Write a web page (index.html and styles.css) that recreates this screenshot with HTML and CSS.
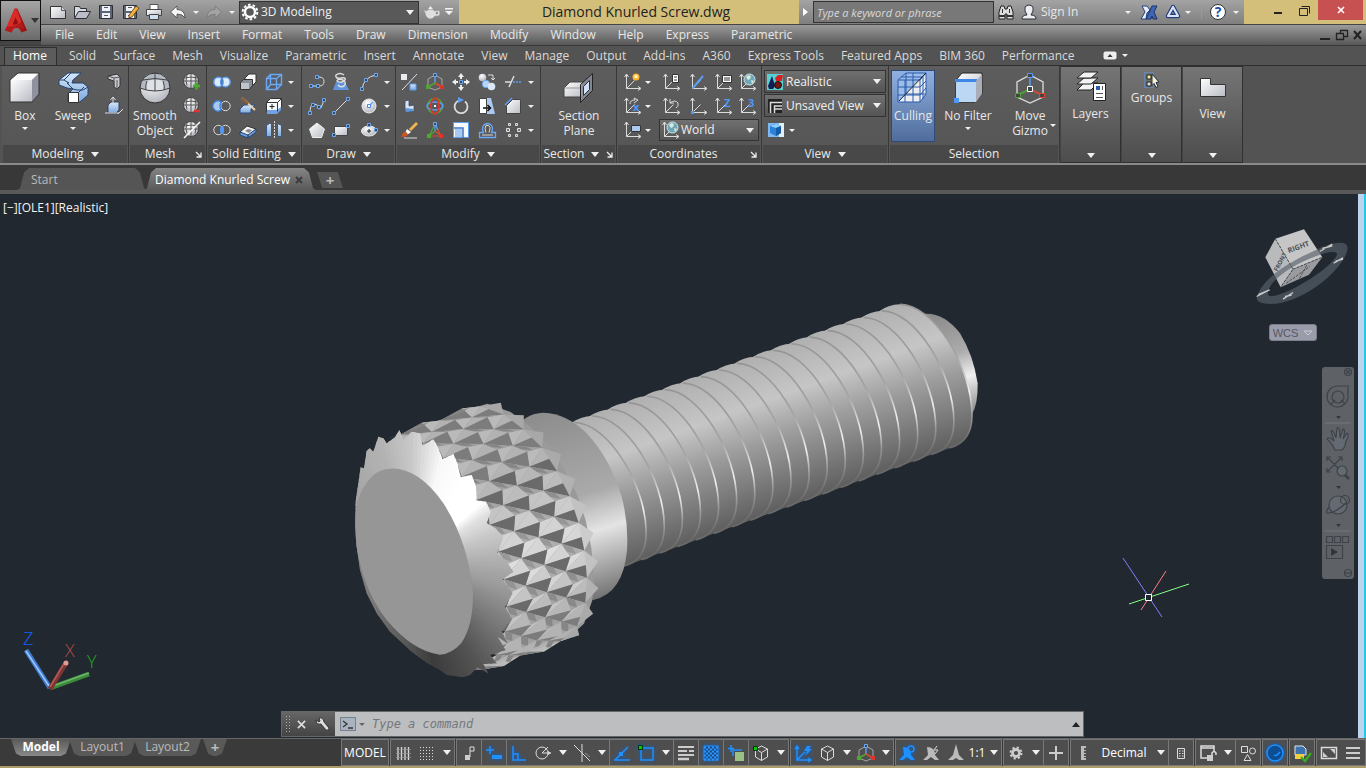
FILE: index.html
```html
<!DOCTYPE html>
<html lang="en">
<head>
<meta charset="UTF-8">
<meta name="viewport" content="width=device-width, initial-scale=1">
<title>Diamond Knurled Screw.dwg</title>
<link rel="stylesheet" href="styles.css">
</head>
<body>

<svg class="sprite" aria-hidden="true">
<defs>
<linearGradient id="gw" x1="0" y1="0" x2="1" y2="1"><stop offset="0" stop-color="#fff"/><stop offset="1" stop-color="#b9bcc4"/></linearGradient>
<linearGradient id="gb" x1="0" y1="0" x2="0" y2="1"><stop offset="0" stop-color="#d6e8fb"/><stop offset="1" stop-color="#7fa9dd"/></linearGradient>
<radialGradient id="gs" cx=".4" cy=".3" r=".8"><stop offset="0" stop-color="#fff"/><stop offset="1" stop-color="#a9adb5"/></radialGradient>
<linearGradient id="gr" x1="0" y1="0" x2="1" y2="0"><stop offset="0" stop-color="#e3342f"/><stop offset="1" stop-color="#8e0f12"/></linearGradient>
</defs>
<!-- quick access -->
<symbol id="logo" viewBox="0 0 26 28"><path d="M12 1h3l10 23-6 2-2-4q-4-2-7 1l-1 3-7-2z" fill="url(#gr)"/><path d="M12 2L4 20q9 0 15-5l-5-13z" fill="#d92b28"/><path d="M13 10l3 6q-3 2-6 2z" fill="#8f1114"/><path d="M2 24l7 2 2-5q6-2 11 1l-3-6q-7 4-15 4z" fill="#b51b1c"/></symbol>
<symbol id="new" viewBox="0 0 20 20"><path d="M2.500 4.500h11l4 4v8h-15z" fill="url(#gw)" stroke="#333"/><path d="M13.500 4.500v4h4" fill="#ddd" stroke="#555"/></symbol>
<symbol id="open" viewBox="0 0 20 20"><path d="M2.500 15.500v-11h5l1 2h6v3" fill="#d8dbe0" stroke="#2c2f36"/><path d="M2.500 16.500l4-7h12l-4 7z" fill="#b9bec8" stroke="#2c2f36"/></symbol>
<symbol id="save" viewBox="0 0 20 20"><path d="M3.500 3.500h13v13h-13z" fill="#5d6675" stroke="#2c2f36"/><path d="M6 4h8v5H6zM6 11h8v5H6z" fill="#eef1f5"/><path d="M8 5h4v1H8zM8 13h4v1H8z" fill="#556"/></symbol>
<symbol id="saveas" viewBox="0 0 20 20"><use href="#save"/><path d="M9 13l7-9 3 2-7 9-3 1z" fill="#f3b13c" stroke="#5a3a10" stroke-width=".8"/></symbol>
<symbol id="print" viewBox="0 0 20 20"><path d="M6 2.500h8v5H6z" fill="#fff" stroke="#555"/><path d="M2.500 7.500h15v6h-15z" fill="url(#gw)" stroke="#444"/><path d="M5.500 12.500h9v5h-9z" fill="#cfe0f4" stroke="#444"/></symbol>
<symbol id="undo" viewBox="0 0 20 20"><path d="M9 4v3.500q8 0 8 8.500-2-4-8-4v4L2.500 10z" fill="#f4f5f7" stroke="#444" stroke-width=".8"/></symbol>
<symbol id="redo" viewBox="0 0 20 20"><path d="M11 4v3.500q-8 0-8 8.500 2-4 8-4v4l6.500-6z" fill="#a4a4a4" stroke="#777" stroke-width=".8"/></symbol>
<symbol id="gear" viewBox="0 0 20 20"><circle cx="10" cy="10" r="5" fill="none" stroke="#fff" stroke-width="2.400"/><circle cx="10" cy="10" r="7.300" fill="none" stroke="#fff" stroke-width="2" stroke-dasharray="2.600 2"/></symbol>
<symbol id="teapot" viewBox="0 0 20 20"><path d="M2 7l3 2q5-4 9 0 5-2 5 2t-5 3q-2 3-4 3-5 0-6-6z" fill="#dedede" stroke="#888" stroke-width=".6"/><path d="M7 7l2.500-3L12 7z" fill="#eee"/><path d="M15 10q2-1 2 1t-2 1z" fill="#888"/></symbol>
<symbol id="menu-down" viewBox="0 0 20 20"><path d="M6 6h8v1.500H6zM6 9h8l-4 4z" fill="#f2f2f2"/></symbol>
<symbol id="binoc" viewBox="0 0 20 20"><path d="M3 17v-7l2-6h3l1 3h2l1-3h3l2 6v7h-6v-5H9v5z" fill="#ddd" stroke="#222"/><path d="M3 13h6v2H3zM11 13h6v2h-6zM6 7h1v4H6zM13 7h1v4h-1z" fill="#333"/></symbol>
<symbol id="user" viewBox="0 0 20 20"><path d="M3 17q0-4 5-4-3-4-2-8 4-4 8 0 1 4-2 8 5 0 5 4z" fill="#eceef2" stroke="#2b2f3a"/></symbol>
<symbol id="exch" viewBox="0 0 20 20"><path d="M3 4h5l3 4-3 3-1 6H2l4-7z" fill="#e8eefa" stroke="#23407c"/><path d="M18 4h-5l-6 13h5l1-3 1 3h4l-3-7z" fill="#3f66b4" stroke="#1c3468"/></symbol>
<symbol id="a360" viewBox="0 0 20 20"><path d="M10 5l5 9H5z" fill="none" stroke="#243c78" stroke-width="4.500" stroke-linejoin="round"/><path d="M10 5l5 9H5z" fill="none" stroke="#d7e2f6" stroke-width="2.200" stroke-linejoin="round"/></symbol>
<!-- large ribbon images -->
<symbol id="box" viewBox="0 0 34 34"><path d="M2 9L10 2h21v21l-7 8H2z" fill="#b5b9c1"/><path d="M2 9h22v22H2z" fill="url(#gw)"/><path d="M2 9l8-7h21l-7 7z" fill="#fdfdfe"/><path d="M24 9l7-7v21l-7 8z" fill="#8d929c"/><path d="M2 9l8-7h21v21l-7 8H2z" fill="none" stroke="#333"/></symbol>
<symbol id="sweep" viewBox="0 0 34 34"><path d="M3 9l9-7h13l-8 7-1 3h11l5 4v8l-8 7H12v-8l5-5-6-1-8-3z" fill="url(#gb)" stroke="#27436f"/><path d="M3 9h5l5 3h-2l6 6 4 1h6l5-3M8 9l7-7M22 22l6-6" fill="none" stroke="#27436f"/><path d="M12.500 21.500h10v10h-10z" fill="#fff" stroke="#333"/></symbol>
<symbol id="sphere" viewBox="0 0 34 34"><circle cx="17" cy="17" r="15" fill="url(#gs)"/><path d="M2 17Q4 2 17 2t15 15q-15 5-30 0z" fill="#b4bac3"/><path d="M9 10q8-3 16 0l1 9q-9 2-18 0z" fill="#dfe3e8"/><path d="M2 17q15 6 30 0M9 10q-2 5-1 9M25 10q2 5 1 9M17 2v18M5 9q12-3 24 0" fill="none" stroke="#444"/><circle cx="17" cy="17" r="15" fill="none" stroke="#333"/></symbol>
<symbol id="section" viewBox="0 0 34 34"><path d="M2 17l6-6h13v15H2z" fill="url(#gw)" stroke="#444"/><path d="M2 17h16l5-6" fill="none" stroke="#999"/><path d="M18.500 13.500l12-11v17l-12 12z" fill="#8b919c" fill-opacity=".8" stroke="#222"/><path d="M21.500 15.500l6-6v9l-6 6z" fill="#cfe2f8" stroke="#333"/></symbol>
<symbol id="culling" viewBox="0 0 34 34"><path d="M2 9l8-7h20l-6 7v22H2z" fill="#9dbce8"/><path d="M2 31L30 2v21l-6 8z" fill="#eceef1"/><g fill="none" stroke="#2b5cae"><path d="M2 9h22v22H2zM2 9l8-7h20v21l-6 8M24 9l6-7M9 9v22M17 9v22M2 16h22l6-6M2 24h22l6-7M5 6h22v22M10 2v21h20M17 2v8"/></g><path d="M3 30L30 2" stroke="#222"/></symbol>
<symbol id="filter" viewBox="0 0 34 34"><path d="M5 9l6-7h20v21l-7 8H5z" fill="url(#gw)" stroke="#222"/><path d="M5 10h20v21H5z" fill="#bcd7f3"/><path d="M4 8h22v3H4z" fill="#3e86e8"/><path d="M25 10l6-7v20l-6 8z" fill="#a9adb5"/><path d="M3 27h5v5H3z" fill="#4d98fa"/></symbol>
<symbol id="gizmo" viewBox="0 0 34 34"><path d="M17 4l13 7v15l-13 6-13-6V11z" fill="none" stroke="#ddd" stroke-width="1.300"/><path d="M17 4v14" stroke="#5c9df0" stroke-width="1.500"/><path d="M17 18L5 24" stroke="#4ea72e" stroke-width="1.800"/><path d="M17 18l12 6" stroke="#e0492c" stroke-width="1.800"/><path d="M14.500 2.500h5v4h-5z" fill="#444" stroke="#5c9df0"/><path d="M14.500 15.500h5v5h-5z" fill="#444" stroke="#fff"/><path d="M2.500 22.500h5v4h-5z" fill="#444" stroke="#4ea72e"/><path d="M26.500 22.500h5v4h-5z" fill="#444" stroke="#e0492c"/></symbol>
<symbol id="layers" viewBox="0 0 34 34"><g fill="#f2f3f5" stroke="#222"><path d="M3 20l7-7h14l-7 7z"/><path d="M3 14l7-6h14l-7 6z"/><path d="M3 8l7-6h14l-7 6z"/></g><path d="M19.500 13.500h12v17h-12z" fill="#fff" stroke="#222"/><path d="M22 16h4v4h-4z" fill="#2b5cae"/><path d="M28 16h1v4h-1zM22 23h7v1h-7zM22 27h7v1h-7z" fill="#555"/></symbol>
<symbol id="groups" viewBox="0 0 20 20"><path d="M2.500 2.500h9v15h-9z" fill="none" stroke="#5c9df0" stroke-dasharray="1 1"/><path d="M5 5h4v4H5z" fill="#f1e7a0" stroke="#222"/><path d="M5 12h4v4H5z" fill="#ddd" stroke="#222"/><path d="M10 4l7 8-3 .500 2 4-2 1-2-4-2 2z" fill="#f7f2c5" stroke="#1c2b52"/></symbol>
<symbol id="viewp" viewBox="0 0 34 34"><path d="M4.500 8.500h10v6h15v12h-25z" fill="url(#gw)" stroke="#333"/></symbol>
<!-- small ribbon images -->
<symbol id="extr" viewBox="0 0 20 20"><path d="M4 4l9-2 3 3v9l-3 3-3-2V9L4 7z" fill="#c7cad1" stroke="#333"/><path d="M4 4l6 2v9M10 6l6-1M13 8v9" fill="none" stroke="#555"/></symbol>
<symbol id="press" viewBox="0 0 20 20"><path d="M4 9l3-3h8v8l-3 3H4z" fill="url(#gb)" stroke="#345"/><path d="M9 9V1M6.500 4L9 1l2.500 3M1 17h14M14 18l5-5" class="w"/></symbol>
<symbol id="ball" viewBox="0 0 20 20"><circle cx="9" cy="9" r="7.500" fill="url(#gs)" stroke="#444"/><path d="M2 9h14M9 2v14M3 6q6-2 12 0M5 3.500q-2 5 0 10M13 3.500q2 5 0 10" fill="none" stroke="#555"/></symbol>
<symbol id="more" viewBox="0 0 20 20"><use href="#ball"/><path d="M11 14h7M14.500 10.500v7" stroke="#46b02a" stroke-width="2.400"/></symbol>
<symbol id="less" viewBox="0 0 20 20"><use href="#ball"/><path d="M12 15h6" stroke="#e0332c" stroke-width="2.400"/></symbol>
<symbol id="crease" viewBox="0 0 20 20"><use href="#ball"/><path d="M2 18L18 2" stroke="#fff" stroke-width="1.400"/></symbol>
<symbol id="union" viewBox="0 0 20 20"><g fill="#dcebfb" stroke="#5c9df0" stroke-width="1.500"><circle cx="6.500" cy="10" r="4.700"/><circle cx="13.500" cy="10" r="4.700"/></g><ellipse cx="10" cy="10" rx="1.700" ry="3.500" fill="#4d83cc"/></symbol>
<symbol id="subtract" viewBox="0 0 20 20"><circle cx="13.500" cy="10" r="4.700" class="w"/><path d="M9 6a5 5 0 1 0 0 8q-2-4 0-8z" fill="#a9c9ee" stroke="#3e86e8" stroke-width="1.400"/></symbol>
<symbol id="intersect" viewBox="0 0 20 20"><circle cx="6.500" cy="10" r="4.700" class="w"/><circle cx="13.500" cy="10" r="4.700" class="w"/><ellipse cx="10" cy="10" rx="2" ry="3.800" fill="#4d98fa"/></symbol>
<symbol id="thick" viewBox="0 0 20 20"><path d="M7 6l4-4h7v8l-4 4H7z" fill="#f7f8fa" stroke="#333"/><path d="M2.500 10.500l3-3h9v6l-3 4h-9z" fill="#8a8e97" stroke="#333"/><path d="M3 11h8v6H3z" fill="#c0c3ca"/></symbol>
<symbol id="slice" viewBox="0 0 20 20"><path d="M2 13l4-4h11l-4 4v4H2z" fill="url(#gb)" stroke="#2c4f86"/><path d="M4 2l13 12" stroke="#e9d3b4" stroke-width="2"/><path d="M4 2l6 6" stroke="#8c5626" stroke-width="2"/></symbol>
<symbol id="shell" viewBox="0 0 20 20"><path d="M2 12l7-6 9 3-8 7z" fill="#f1f2f4" stroke="#333"/><path d="M2 12v3l8 3v-3zM10 15v3l8-6V9z" fill="#6fa3e3" stroke="#27436f"/><path d="M7 11l3-2 4 1-3 3z" fill="#888"/></symbol>
<symbol id="edges" viewBox="0 0 20 20"><path d="M2.500 6.500h10v11h-10zM6.500 2.500h11v10h-11zM2.500 6.500l4-4M12.500 6.500l5-4M12.500 17.500l5-5M2.500 17.500l4-5" class="b"/></symbol>
<symbol id="facex" viewBox="0 0 20 20"><path d="M2.500 6.500l4-4h11v9l-4 4h-11z" fill="#f7f8fa" stroke="#333"/><path d="M3 14h10l4-3v3l-4 4H3z" fill="#6fa3e3"/><path d="M2.500 6.500h11v9M13.500 6.500l4-4" fill="none" stroke="#333"/><path d="M8 8v5M5.500 10.500h5" stroke="#222"/></symbol>
<symbol id="sep" viewBox="0 0 20 20"><path d="M2.500 5.500l3-2h2v13h-5zM13.500 3.500l4 2v11h-4z" fill="url(#gb)" stroke="#39588c"/><path d="M10.500 1v18" stroke="#ddd" stroke-dasharray="2 1"/></symbol>
<symbol id="pline" viewBox="0 0 20 20"><path d="M4 14h8q5 0 5-4.500T12 5h-2" class="w"/><path d="M2.500 12.500h3v3h-3zM9.500 12.500h3v3h-3zM8.500 3.500h3v3h-3z" class="n"/></symbol>
<symbol id="helix" viewBox="0 0 20 20"><path d="M5 10h9l4 8H2z" fill="#5f95dc"/><path d="M13 3q-4-3-8 0-1 4 5 3 5-1 4 2-4 4-8 1 1-3 6-1 4 3 1 6-4 2-6-1" class="w" stroke-width="1.500"/></symbol>
<symbol id="arc" viewBox="0 0 20 20"><path d="M3 17Q5 5 17 3" class="w"/><path d="M1.500 15.500h3v3h-3zM5.500 6.500h3v3h-3zM15.500 1.500h3v3h-3z" class="n"/></symbol>
<symbol id="spline" viewBox="0 0 20 20"><path d="M3 17q0-9 4-9t5 4 5-8" class="w"/><path d="M1.500 15.500h3v3h-3zM4.500 7.500h3v3h-3zM10.500 9.500h3v3h-3zM15.500 2.500h3v3h-3z" class="n"/></symbol>
<symbol id="line" viewBox="0 0 20 20"><path d="M3 17L17 3" class="w"/><path d="M1.500 15.500h3v3h-3zM15.500 1.500h3v3h-3z" class="n"/></symbol>
<symbol id="circle" viewBox="0 0 20 20"><circle cx="10" cy="10" r="7" fill="url(#gs)" stroke="#eee"/><path d="M10 10l4-4" class="b"/><path d="M8.500 8.500h3v3h-3z" fill="#fff" stroke="#3e86e8"/></symbol>
<symbol id="polygon" viewBox="0 0 20 20"><path d="M10 3l7.500 6-3 8.500h-9L2.500 9z" fill="url(#gw)" stroke="#eee"/></symbol>
<symbol id="rect" viewBox="0 0 20 20"><path d="M3.500 6.500h13v9h-13z" fill="url(#gw)" stroke="#444"/><path d="M1.500 13.500h3v3h-3zM15.500 4.500h3v3h-3z" class="n"/></symbol>
<symbol id="ellipse" viewBox="0 0 20 20"><ellipse cx="10" cy="11" rx="7.500" ry="5" fill="url(#gs)" stroke="#eee"/><path d="M10 9v4M8 11h4" stroke="#222"/><path d="M8.500 3.500h3v3h-3zM15.500 8.500h3v3h-3z" class="n"/></symbol>
<symbol id="conv" viewBox="0 0 20 20"><path d="M2 2h6v6H2z" fill="#e8eaee"/><path d="M11 12h6v6h-6z" fill="url(#gb)" stroke="#5c9df0"/><path d="M3 18L18 2" class="w"/></symbol>
<symbol id="shape" viewBox="0 0 20 20"><path d="M6 5l4-1v6l5-1v5l-8 2-1-4z" fill="#d9e3f2" stroke="#3b4c6b" stroke-width=".8"/><path d="M6 12l9 1v2l-8 1z" fill="#5f95dc"/></symbol>
<symbol id="brush" viewBox="0 0 20 20"><path d="M10 9l7-7 2 2-7 7z" fill="#f0b64d"/><path d="M8 9l4 3-4 3-2-2z" fill="#fff"/><path d="M2 17q2-6 5-5l2 2q-1 3-5 3z" fill="#c8561f"/><path d="M5 18h13" class="w"/></symbol>
<symbol id="g3move" viewBox="0 0 20 20"><path d="M10 3l7 4v8l-7 3-7-3V7z" class="w" opacity=".6"/><path d="M10 3v8" stroke="#5c9df0" stroke-width="1.500"/><path d="M10 11l-7 4" stroke="#4ea72e" stroke-width="1.500"/><path d="M10 11l7 4" stroke="#e0492c" stroke-width="1.500"/><path d="M8.500 1.500h3v3h-3z" class="n"/><path d="M1 13h4v4H1z" fill="#4ea72e"/><path d="M15 13h4v4h-4z" fill="#e0332c"/></symbol>
<symbol id="g3rot" viewBox="0 0 20 20"><circle cx="10" cy="10" r="7.500" fill="none" stroke="#4ea72e" stroke-width="1.500"/><ellipse cx="10" cy="10" rx="8" ry="4" fill="none" stroke="#5c9df0" stroke-width="1.500"/><ellipse cx="10" cy="10" rx="4" ry="8" fill="none" stroke="#e0332c" stroke-width="1.700"/><path d="M9 9h2v2H9z" fill="#fff"/></symbol>
<symbol id="g3sca" viewBox="0 0 20 20"><path d="M10 4L4 16M10 11l-6 5" stroke="#4ea72e" stroke-width="1.200"/><path d="M10 3v8M10 4l3 6" stroke="#5c9df0" stroke-width="1.200"/><path d="M4 16h12l-6-5M13 10l3 6" fill="none" stroke="#e0492c" stroke-width="1.200"/><path d="M8.500 2.500h3v3h-3z" class="n"/><path d="M2 14h4v4H2z" fill="#4ea72e"/><path d="M14 14h4v4h-4z" fill="#e0332c"/></symbol>
<symbol id="move" viewBox="0 0 20 20"><path d="M10 1l3 4h-2v2H9V5H7zM10 19l3-4h-2v-2H9v2H7zM1 10l4-3v2h2v2H5v2zM19 10l-4-3v2h-2v2h2v2z" fill="#eceef1"/><path d="M8.500 8.500h3v3h-3z" class="n"/></symbol>
<symbol id="rotate" viewBox="0 0 20 20"><path d="M8 4.500a6.500 6.500 0 1 0 6 1" class="w" stroke-width="1.800"/><path d="M7 1l6 3-6 3z" fill="#5c9df0"/></symbol>
<symbol id="scale" viewBox="0 0 20 20"><path d="M2.500 2.500h15v15h-15z" fill="#f7f8fa" stroke="#5c9df0"/><path d="M3 8h9v10" fill="none" stroke="#3e76c8" stroke-width="1.500"/><path d="M4 9h7v8H4z" fill="#a9c9ee"/></symbol>
<symbol id="copy" viewBox="0 0 20 20"><circle cx="5.500" cy="5.500" r="3.800" fill="url(#gs)"/><circle cx="9" cy="12" r="3.800" fill="#b9d3f2" stroke="#5c9df0" stroke-width=".8"/><circle cx="14.500" cy="14.500" r="3.800" fill="#d9e7f8"/><path d="M11 3h5v4M14 6l2 2 2-2" class="w"/></symbol>
<symbol id="stretch" viewBox="0 0 20 20"><path d="M2.500 2.500h7v15h-7z" fill="#fff" stroke="#444"/><path d="M10 2h4l4 16h-8z" fill="#a9c9ee"/><path d="M6 12h7M10.500 9l3 3-3 3" fill="none" stroke="#111" stroke-width="1.500"/></symbol>
<symbol id="offset" viewBox="0 0 20 20"><path d="M2.500 17.500v-5h4q-2-4 0-7 4-4 8 0 2 3 0 7h4v5z" fill="none" stroke="#6aa9f7" stroke-width="1.300"/><path d="M5 15h11M9 12.500q-2-5 0-7 3-1 4 2 0 2-1 5" class="w"/></symbol>
<symbol id="trim" viewBox="0 0 20 20"><path d="M2 10h6M6 15l5-11" class="w" stroke-width="1.500"/><path d="M10 10h9" stroke="#5c9df0" stroke-width="1.500" stroke-dasharray="2 1"/></symbol>
<symbol id="chamfer" viewBox="0 0 20 20"><path d="M3.500 17.500v-8l6-6h8v14z" fill="url(#gw)" stroke="#444"/><path d="M2 9l7-7" stroke="#5c9df0" stroke-width="1.500"/></symbol>
<symbol id="array" viewBox="0 0 20 20"><g fill="#777" stroke="#ddd"><path d="M3.500 8.500h3v3h-3zM14.500 8.500h3v3h-3z"/><path d="M5.500 3.500h2v2h-2zM12.500 3.500h2v2h-2zM5.500 14.500h2v2h-2zM12.500 14.500h2v2h-2z"/></g></symbol>
<symbol id="ax" viewBox="0 0 20 20"><path d="M4.500 3v13.500H18M2.500 5l2-3 2 3M16 14.500l3 2-3 2M4.500 16.500l8-8" class="w"/></symbol>
<symbol id="ucsnew" viewBox="0 0 20 20"><use href="#ax"/><circle cx="14" cy="5" r="3.500" fill="#ffb52e"/><circle cx="14" cy="4.500" r="1.700" fill="#fff6c8"/></symbol>
<symbol id="ucsview" viewBox="0 0 20 20"><use href="#ax"/><path d="M9.500 5.500h9v6h-9z" fill="#a9c9ee" stroke="#333"/></symbol>
<symbol id="ucsface" viewBox="0 0 20 20"><use href="#ax"/><path d="M11.500 2.500h6v8h-6z" fill="#fff" stroke="#333"/><path d="M13 5h3M13 8h3" stroke="#333"/></symbol>
<symbol id="ucsobj" viewBox="0 0 20 20"><use href="#ax"/><path d="M4.500 16.500L15 4" stroke="#5c9df0" stroke-width="2"/></symbol>
<symbol id="ucsnamed" viewBox="0 0 20 20"><use href="#ax"/><path d="M9.500 3.500h9v7h-9z" fill="#fff" stroke="#333"/><path d="M11 6h6M11 8h6" stroke="#333"/></symbol>
<symbol id="ucsworld" viewBox="0 0 20 20"><use href="#ax"/><circle cx="12.500" cy="7.500" r="5.500" fill="#6ea8b8" stroke="#cfe6ee"/><path d="M9 5q2-3 5-1l-1 3-2 1zM14 8l3 1-2 3z" fill="#dcebd8"/></symbol>
<symbol id="ucsprev" viewBox="0 0 20 20"><use href="#ax"/><path d="M9 7q5-4 8 0 1 3-2 5M9 3v4h4" class="w"/></symbol>
<symbol id="ucsorg" viewBox="0 0 20 20"><use href="#ax"/><path d="M3 15h3v3H3z" fill="#4d98fa"/></symbol>
<symbol id="real" viewBox="0 0 20 20"><path d="M2 2h16v16H2z" fill="#58cfd0"/><path d="M3 14l4-10 3 10-2 3H4z" fill="#121b55"/><path d="M10 6l3-3h5l-1 6h-6z" fill="#d9201f"/><circle cx="13" cy="13" r="3.500" fill="#7a1414" stroke="#111"/></symbol>
<symbol id="unsaved" viewBox="0 0 20 20"><path d="M3 3h14v14H3z" fill="#222"/><path d="M5.500 17V6.500H17M9.500 17v-7H17M10 13h7" class="w" stroke-width="1.500"/></symbol>
<symbol id="vcube" viewBox="0 0 20 20"><path d="M2 3h16v14H2z" fill="#7db8ee"/><path d="M13 3h5v14h-5z" fill="#e6eef6"/><path d="M4 6l5-2 6 2v7l-5 3-6-3z" fill="#2b80d8"/><path d="M4 6l6 2 5-2-5-2z" fill="#8fd0ff"/><path d="M10 8v8l5-3V6z" fill="#155ba6"/></symbol>
<!-- status bar -->
<symbol id="s-grid" viewBox="0 0 20 20"><path d="M5 4v13M8.500 4v13M12 4v13M15.500 4v13" stroke="#ddd" stroke-width="1.300"/><path d="M3 6.500h15M3 10.500h15M3 14.500h15" stroke="#999" stroke-width=".7"/></symbol>
<symbol id="s-dots" viewBox="0 0 20 20"><path d="M3 4.500h14M3 7.500h14M3 10.500h14M3 13.500h14M3 16.500h14" stroke="#ddd" stroke-dasharray="1 2"/></symbol>
<symbol id="s-snap" viewBox="0 0 20 20"><path d="M11 14V4h4v4h-4" class="w"/><path d="M6 12h5v5H6z" fill="#ccc"/></symbol>
<symbol id="s-dyn" viewBox="0 0 20 20"><path d="M6 3v8M2 7h8" class="s"/><path d="M8 12h10v4H8z" fill="#1e90ff"/></symbol>
<symbol id="s-ortho" viewBox="0 0 20 20"><path d="M4 3v14h13M4 11h5v6" class="s"/></symbol>
<symbol id="s-polar" viewBox="0 0 20 20"><circle cx="9" cy="10" r="6" class="w"/><path d="M9 10h9M9 10l6-6" class="w"/><path d="M15 8l3 2-3 2z" fill="#dcdcdc"/></symbol>
<symbol id="s-iso" viewBox="0 0 20 20"><path d="M2 2l16 16M10 1v18" class="w"/><path d="M18 14l-5-4" class="w" opacity=".5"/></symbol>
<symbol id="s-track" viewBox="0 0 20 20"><path d="M2 17h16M3 17L16 4" class="s"/><path d="M7 9h4v4H7z" fill="#1e90ff"/></symbol>
<symbol id="s-osnap" viewBox="0 0 20 20"><path d="M5 5h12v12H5z" class="s"/><path d="M2.500 2.500h4v4h-4z" fill="#0c0" stroke="#031"/></symbol>
<symbol id="s-lwt" viewBox="0 0 20 20"><path d="M2 4h16" stroke="#ccc" stroke-width="2"/><path d="M2 8h9M13 8h5M2 12h16" stroke="#ccc" stroke-width="2"/><path d="M2 16h11" stroke="#ccc" stroke-width="2.500"/></symbol>
<symbol id="s-trans" viewBox="0 0 20 20"><path d="M3 3h14v14H3z" fill="#174b87" stroke="#1e90ff"/><path d="M3 4.500h14M3 8.500h14M3 12.500h14M3 16.500h14" stroke="#2f93fa" stroke-width="2" stroke-dasharray="2 2"/><path d="M5 6.500h12M5 10.500h12M5 14.500h12" stroke="#2f93fa" stroke-width="2" stroke-dasharray="2 2"/></symbol>
<symbol id="s-cycle" viewBox="0 0 20 20"><path d="M5 2v7M2 5.500h6M7 13V7h9" class="s"/><path d="M9 9h9v9H9z" fill="#9cc083"/></symbol>
<symbol id="s-cube" viewBox="0 0 20 20"><path d="M10.500 3l6 3v8l-6 3.500-6-3.500V6zM4.500 6l6 3.500 6-3.500M10.500 9.500v8" class="w"/></symbol>
<symbol id="s-3dos" viewBox="0 0 20 20"><use href="#s-cube"/><path d="M2.500 3.500h4v4h-4z" fill="#0c0" stroke="#031"/></symbol>
<symbol id="s-ducs" viewBox="0 0 20 20"><path d="M4 4v13h14M4 17l8-8M2 6l2-3 2 3M15 15l3 2-3 2" class="s"/><path d="M14 3l-3 5h3l-2 5 7-7h-3l2-3z" fill="#1e90ff"/></symbol>
<symbol id="s-ann" viewBox="0 0 20 20"><path d="M10 1l3 11 5 5h-5l-3-2-3 2H2l5-5z" fill="#bbb"/></symbol>
<symbol id="s-ann1" viewBox="0 0 20 20"><path d="M5 4q8 0 8 8l4 5h-4l-4-3-4 3H1l5-5z" fill="#1e90ff"/><circle cx="13" cy="6" r="3" class="s"/></symbol>
<symbol id="s-ann2" viewBox="0 0 20 20"><path d="M5 4q8 0 8 8l4 5h-4l-4-3-4 3H1l5-5z" fill="#bbb"/><path d="M15 3l-3 4h4l-3 4" class="w"/></symbol>
<symbol id="s-gear" viewBox="0 0 20 20"><circle cx="10" cy="10" r="3.500" fill="none" stroke="#ccc" stroke-width="2.800"/><circle cx="10" cy="10" r="5.500" fill="none" stroke="#ccc" stroke-width="2" stroke-dasharray="2.200 2.120"/></symbol>
<symbol id="s-plus" viewBox="0 0 20 20"><path d="M3 10h14M10 3v14" stroke="#ccc" stroke-width="2"/></symbol>
<symbol id="s-ruler" viewBox="0 0 20 20"><path d="M8 3h5v2h-2v2h2v1h-2v2h2v1h-2v2h2v1h-2v1h2v2H8z" fill="#bbb"/></symbol>
<symbol id="s-list" viewBox="0 0 20 20"><path d="M6.500 5.500h7v10h-7z" class="w"/><path d="M8 8h1.500M11 8h1.500M8 10.500h1.500M11 10.500h1.500M8 13h1.500M11 13h1.500" stroke="#ddd"/></symbol>
<symbol id="s-lock" viewBox="0 0 20 20"><path d="M9 15H3V3h13v5M3 5h13" class="w" stroke-width="1.500"/><path d="M9 12h6v6H9z" fill="#ccc"/><path d="M14 12v-2q2-3 4 0v2" class="w" stroke-width="1.500"/></symbol>
<symbol id="s-iso2" viewBox="0 0 20 20"><path d="M3.500 3.500h6v6h-6zM6 17.500l3.500-6 3.500 6z" class="w"/><circle cx="14.500" cy="8" r="3" class="w"/></symbol>
<symbol id="s-hw" viewBox="0 0 20 20"><circle cx="10" cy="10" r="8" fill="#0d4d92" stroke="#1e90ff" stroke-width="1.500"/><path d="M9 12q2 2 6-3" fill="none" stroke="#1e90ff" stroke-width="1.500"/></symbol>
<symbol id="s-dwg" viewBox="0 0 20 20"><path d="M3 3h8l3 3v6H3z" fill="#3f73ae" stroke="#dfe8f2"/><path d="M3 11h9v5H3z" fill="#f4d03c"/><path d="M9 14l4 4 6-8" fill="none" stroke="#36b01c" stroke-width="2.200"/></symbol>
<symbol id="s-clean" viewBox="0 0 20 20"><path d="M2.500 4.500h15v11h-15z" class="w" stroke-width="1.500"/><path d="M11 6h5v5zM9 14H4V9z" fill="#ccc"/></symbol>
<symbol id="s-menu" viewBox="0 0 20 20"><path d="M3 5h14M3 10h14M3 15h14" stroke="#ccc" stroke-width="2"/></symbol>
</svg>

<header class="top">
  <button class="app" aria-label="Application menu"><svg><use href="#logo"/></svg><i class="dd dark"></i></button>
  <div class="titlebar">
    <div class="qat">
      <button aria-label="New"><svg class="i"><use href="#new"/></svg></button>
      <button aria-label="Open"><svg class="i"><use href="#open"/></svg></button>
      <button aria-label="Save"><svg class="i"><use href="#save"/></svg></button>
      <button aria-label="Save as"><svg class="i"><use href="#saveas"/></svg></button>
      <button aria-label="Plot"><svg class="i"><use href="#print"/></svg></button>
      <button aria-label="Undo"><svg class="i"><use href="#undo"/></svg></button>
      <button class="thin" aria-label="Undo list"><i class="dd small"></i></button>
      <button aria-label="Redo"><svg class="i"><use href="#redo"/></svg></button>
      <button class="thin" aria-label="Redo list"><i class="dd small"></i></button>
      <label class="combo workspace"><svg class="i"><use href="#gear"/></svg><select aria-label="Workspace"><option>3D Modeling</option></select><i class="dd"></i></label>
      <button aria-label="Render"><svg class="i"><use href="#teapot"/></svg></button>
      <button class="thin" aria-label="Customize"><svg class="i"><use href="#menu-down"/></svg></button>
    </div>
    <h1>Diamond Knurled Screw.dwg</h1>
    <div class="info">
      <i class="play"></i>
      <input type="text" class="search" placeholder="Type a keyword or phrase" aria-label="Search">
      <button aria-label="Find"><svg class="i"><use href="#binoc"/></svg></button>
      <button class="signin"><svg class="i"><use href="#user"/></svg>Sign In<i class="dd small"></i></button>
      <button aria-label="Exchange"><svg class="i"><use href="#exch"/></svg></button>
      <button aria-label="A360"><svg class="i"><use href="#a360"/></svg></button>
      <i class="dd small"></i>
      <span class="rule"></span>
      <button aria-label="Help"><svg class="i" viewBox="0 0 20 20"><circle cx="10" cy="10" r="7.500" fill="#fff" stroke="#333"/><text x="10" y="15" class="qm">?</text></svg></button>
      <i class="dd small"></i>
    </div>
    <div class="win">
      <button aria-label="Minimize"><svg viewBox="0 0 12 12"><path d="M2 8h8" stroke="#222" stroke-width="2"/></svg></button>
      <button aria-label="Restore"><svg viewBox="0 0 12 12"><path d="M1.500 3.500h8v7h-8zM3.500 1.500h8v7" fill="none" stroke="#222"/></svg></button>
      <button class="close" aria-label="Close"><svg viewBox="0 0 12 12"><path d="M3 3l6 6M9 3L3 9" stroke="#fff" stroke-width="1.600"/></svg></button>
    </div>
  </div>
  <nav class="menubar">
    <button>File</button><button>Edit</button><button>View</button><button>Insert</button><button>Format</button><button>Tools</button><button>Draw</button><button>Dimension</button><button>Modify</button><button>Window</button><button>Help</button><button>Express</button><button>Parametric</button>
    <span class="docwin"><svg viewBox="0 0 46 14"><path d="M2 11h10" stroke="#222" stroke-width="2"/><path d="M18.500 5.500h7v6h-7zM22.500 5V2.500h7v6H26" fill="none" stroke="#222" stroke-width="1.300"/><path d="M36 3l7 8M43 3l-7 8" stroke="#222" stroke-width="2"/></svg></span>
  </nav>
</header>

<nav class="tabs">
  <button class="on">Home</button><button>Solid</button><button>Surface</button><button>Mesh</button><button>Visualize</button><button>Parametric</button><button>Insert</button><button>Annotate</button><button>View</button><button>Manage</button><button>Output</button><button>Add-ins</button><button>A360</button><button>Express Tools</button><button>Featured Apps</button><button>BIM 360</button><button>Performance</button>
  <button class="mini" aria-label="Minimize ribbon"><svg viewBox="0 0 14 9"><rect x=".5" y=".5" width="13" height="8" rx="2" fill="#eee"/><path d="M4.500 6L7 3l2.500 3z" fill="#333"/></svg></button><i class="dd small"></i>
</nav>

<section class="ribbon">
  <div class="panel modeling">
    <div class="tools">
      <button class="big"><svg><use href="#box"/></svg>Box<i class="dd small"></i></button>
      <button class="big"><svg><use href="#sweep"/></svg>Sweep<i class="dd small"></i></button>
      <div class="grid one">
        <button aria-label="Polysolid"><svg class="i"><use href="#extr"/></svg></button>
        <button aria-label="Presspull"><svg class="i"><use href="#press"/></svg></button>
      </div>
    </div>
    <h2>Modeling<i class="dd"></i></h2>
  </div>
  <div class="panel mesh">
    <div class="tools">
      <button class="big"><svg><use href="#sphere"/></svg>Smooth<br>Object</button>
      <div class="grid one">
        <button aria-label="Smooth more"><svg class="i"><use href="#more"/></svg></button>
        <button aria-label="Smooth less"><svg class="i"><use href="#less"/></svg></button>
        <button aria-label="Refine"><svg class="i"><use href="#crease"/></svg></button>
      </div>
    </div>
    <h2>Mesh<svg class="launch" viewBox="0 0 7 7"><path d="M1 1l5 5M6 1.500V6H1.500" fill="none" stroke="#eee" stroke-width="1.300"/></svg></h2>
  </div>
  <div class="panel editing">
    <div class="tools">
      <div class="grid">
        <button aria-label="Union"><svg class="i"><use href="#union"/></svg></button>
        <button aria-label="Thicken"><svg class="i"><use href="#thick"/></svg></button>
        <button aria-label="Extract edges"><svg class="i"><use href="#edges"/></svg></button>
        <i class="dd small"></i>
        <button aria-label="Subtract"><svg class="i"><use href="#subtract"/></svg></button>
        <button aria-label="Slice"><svg class="i"><use href="#slice"/></svg></button>
        <button aria-label="Extrude faces"><svg class="i"><use href="#facex"/></svg></button>
        <i class="dd small"></i>
        <button aria-label="Intersect"><svg class="i"><use href="#intersect"/></svg></button>
        <button aria-label="Shell"><svg class="i"><use href="#shell"/></svg></button>
        <button aria-label="Separate"><svg class="i"><use href="#sep"/></svg></button>
        <i class="dd small"></i>
      </div>
    </div>
    <h2>Solid Editing<i class="dd"></i></h2>
  </div>
  <div class="panel draw">
    <div class="tools">
      <div class="grid">
        <button aria-label="Polyline"><svg class="i"><use href="#pline"/></svg></button>
        <button aria-label="Helix"><svg class="i"><use href="#helix"/></svg></button>
        <button aria-label="Arc"><svg class="i"><use href="#arc"/></svg></button>
        <i class="dd small"></i>
        <button aria-label="Spline"><svg class="i"><use href="#spline"/></svg></button>
        <button aria-label="Line"><svg class="i"><use href="#line"/></svg></button>
        <button aria-label="Circle"><svg class="i"><use href="#circle"/></svg></button>
        <i class="dd small"></i>
        <button aria-label="Polygon"><svg class="i"><use href="#polygon"/></svg></button>
        <button aria-label="Rectangle"><svg class="i"><use href="#rect"/></svg></button>
        <button aria-label="Ellipse"><svg class="i"><use href="#ellipse"/></svg></button>
        <i class="dd small"></i>
      </div>
    </div>
    <h2>Draw<i class="dd"></i></h2>
  </div>
  <div class="panel modify">
    <div class="tools">
      <div class="grid">
        <button aria-label="Convert"><svg class="i"><use href="#conv"/></svg></button>
        <button aria-label="3D move"><svg class="i"><use href="#g3move"/></svg></button>
        <button aria-label="Move"><svg class="i"><use href="#move"/></svg></button>
        <button aria-label="Copy"><svg class="i"><use href="#copy"/></svg></button>
        <button aria-label="Trim"><svg class="i"><use href="#trim"/></svg></button>
        <i class="dd small"></i>
        <button aria-label="Align"><svg class="i"><use href="#shape"/></svg></button>
        <button aria-label="3D rotate"><svg class="i"><use href="#g3rot"/></svg></button>
        <button aria-label="Rotate"><svg class="i"><use href="#rotate"/></svg></button>
        <button aria-label="Stretch"><svg class="i"><use href="#stretch"/></svg></button>
        <button aria-label="Chamfer"><svg class="i"><use href="#chamfer"/></svg></button>
        <i class="dd small"></i>
        <button aria-label="Erase"><svg class="i"><use href="#brush"/></svg></button>
        <button aria-label="3D scale"><svg class="i"><use href="#g3sca"/></svg></button>
        <button aria-label="Scale"><svg class="i"><use href="#scale"/></svg></button>
        <button aria-label="Offset"><svg class="i"><use href="#offset"/></svg></button>
        <button aria-label="Array"><svg class="i"><use href="#array"/></svg></button>
        <i class="dd small"></i>
      </div>
    </div>
    <h2>Modify<i class="dd"></i></h2>
  </div>
  <div class="panel section">
    <div class="tools">
      <button class="big"><svg><use href="#section"/></svg>Section<br>Plane</button>
    </div>
    <h2>Section<i class="dd"></i><svg class="launch" viewBox="0 0 7 7"><path d="M1 1l5 5M6 1.500V6H1.500" fill="none" stroke="#eee" stroke-width="1.300"/></svg></h2>
  </div>
  <div class="panel coords">
    <div class="tools">
      <div class="grid">
        <button aria-label="UCS"><svg class="i"><use href="#ucsnew"/></svg></button>
        <i class="dd small"></i>
        <button aria-label="Face UCS"><svg class="i"><use href="#ucsface"/></svg></button>
        <button aria-label="Object UCS"><svg class="i"><use href="#ucsobj"/></svg></button>
        <button aria-label="Named UCS"><svg class="i"><use href="#ucsnamed"/></svg></button>
        <button aria-label="World UCS"><svg class="i"><use href="#ucsworld"/></svg></button>
        <button aria-label="Rotate X"><svg class="i" viewBox="0 0 20 20"><use href="#ax"/><path d="M8 8q0-4 5-4l-1-2 4 2-4 3" class="w"/><text x="11" y="15" class="ax">x</text></svg></button>
        <i class="dd small"></i>
        <button aria-label="Previous UCS"><svg class="i"><use href="#ucsprev"/></svg></button>
        <button aria-label="Origin"><svg class="i"><use href="#ucsorg"/></svg></button>
        <button aria-label="Z-axis vector"><svg class="i" viewBox="0 0 20 20"><use href="#ax"/><text x="11" y="11" class="ax">Z</text></svg></button>
        <button aria-label="3-point"><svg class="i" viewBox="0 0 20 20"><use href="#ax"/><text x="11" y="11" class="ax">3</text></svg></button>
        <button aria-label="View UCS"><svg class="i"><use href="#ucsview"/></svg></button>
        <i class="dd small"></i>
        <label class="combo world"><svg class="i"><use href="#ucsworld"/></svg><select aria-label="Current UCS"><option>World</option></select><i class="dd"></i></label>
      </div>
    </div>
    <h2>Coordinates<svg class="launch" viewBox="0 0 7 7"><path d="M1 1l5 5M6 1.500V6H1.500" fill="none" stroke="#eee" stroke-width="1.300"/></svg></h2>
  </div>
  <div class="panel views">
    <div class="tools col">
      <label class="combo"><svg class="i"><use href="#real"/></svg><select aria-label="Visual style"><option>Realistic</option></select><i class="dd"></i></label>
      <label class="combo"><svg class="i"><use href="#unsaved"/></svg><select aria-label="Named view"><option>Unsaved View</option></select><i class="dd"></i></label>
      <button class="viewbtn" aria-label="Projection"><svg class="i"><use href="#vcube"/></svg><i class="dd small"></i></button>
    </div>
    <h2>View<i class="dd"></i></h2>
  </div>
  <div class="panel selection">
    <div class="tools">
      <button class="big pressed"><svg><use href="#culling"/></svg>Culling</button>
      <button class="big"><svg><use href="#filter"/></svg>No Filter<i class="dd small"></i></button>
      <button class="big"><svg><use href="#gizmo"/></svg>Move<br>Gizmo</button><i class="dd small low"></i>
    </div>
    <h2>Selection</h2>
  </div>
  <button class="panel folded"><svg><use href="#layers"/></svg>Layers<i class="dd"></i></button>
  <button class="panel folded"><svg class="i"><use href="#groups"/></svg>Groups<i class="dd"></i></button>
  <button class="panel folded"><svg><use href="#viewp"/></svg>View<i class="dd"></i></button>
</section>

<nav class="files">
  <button class="file">Start</button>
  <button class="file on">Diamond Knurled Screw<svg class="x" viewBox="0 0 8 8"><path d="M1 1l6 6M7 1L1 7" stroke="#3c3c3c" stroke-width="2"/></svg></button>
  <button class="file add" aria-label="New drawing">+</button>
</nav>

<main class="canvas">
  <div class="vplabel">[−][OLE1][Realistic]</div>
  <svg class="scene" viewBox="340 290 660 400" role="img" aria-label="Diamond knurled screw">
    <defs>
      <linearGradient id="thread" gradientUnits="userSpaceOnUse" x1="1020" y1="40" x2="1160" y2="470"><stop offset="0" stop-color="#b0b0b0"/><stop offset=".3" stop-color="#c6c6c6"/><stop offset=".55" stop-color="#9d9d9d"/><stop offset="1" stop-color="#606060"/></linearGradient>
      <linearGradient id="ring" gradientUnits="userSpaceOnUse" x1="1020" y1="40" x2="1160" y2="470"><stop offset="0" stop-color="#949494"/><stop offset=".45" stop-color="#a4a4a4"/><stop offset=".7" stop-color="#efefef"/><stop offset=".85" stop-color="#999"/><stop offset="1" stop-color="#6a6a6a"/></linearGradient>
      <linearGradient id="tip" gradientUnits="userSpaceOnUse" x1="1130" y1="75" x2="1215" y2="375"><stop offset="0" stop-color="#8c8c8c"/><stop offset=".4" stop-color="#ababab"/><stop offset=".65" stop-color="#f0f0f0"/><stop offset="1" stop-color="#888"/></linearGradient>
      <linearGradient id="collar" gradientUnits="userSpaceOnUse" x1="640" y1="100" x2="810" y2="650"><stop offset="0" stop-color="#8e8e8e"/><stop offset=".45" stop-color="#aaa"/><stop offset=".65" stop-color="#e4e4e4"/><stop offset="1" stop-color="#707070"/></linearGradient>
      <clipPath id="bevel"><path id="bevel-path"/></clipPath>
    </defs>
    <g id="shank" transform="translate(560 290) scale(.33333)"></g>
    <g id="head" transform="translate(340 380) scale(.33333)"></g>
  </svg>

  <svg class="viewcube" viewBox="460 70 300 260" role="img" aria-label="ViewCube">
    <path d="M497 172l30-55 53 91-37 54z" fill="#b9babc"/><path d="M527 117l86-29 55 84-88 36z" fill="#c6c6c6"/><path d="M543 262l37-54 88-36-40 53z" fill="#999b9e"/>
    <path d="M527 117l53 91-37 54M580 208l88-36M600 235l22-40M560 250l70-50" fill="none" stroke="#444b54" stroke-width="3" stroke-dasharray="8 4"/>
    <path d="M472 290C490 235 560 190 660 145C720 120 752 125 742 155C725 215 600 320 500 312Q465 308 472 290zM505 285C520 310 690 215 712 165C715 145 650 165 600 190C550 215 500 255 505 285z" fill="#59616b" fill-opacity=".65" fill-rule="evenodd"/>
    <text class="face" transform="translate(567 160) rotate(-20)">RIGHT</text>
    <text class="face small" transform="translate(533 216) rotate(-62)">FRONT</text>
    <path d="M471 290l38-20M476 284l34-14M550 298l30-20M556 290l20-4M660 155l38-22M668 146l30-8M702 190l28-16M708 184l22-6" stroke="#c8cac8" stroke-width="4"/>
  </svg>
  <button class="wcs">WCS<svg viewBox="0 0 10 6"><path d="M1 1h8L5 5z" fill="none" stroke="#c9cad4"/></svg></button>

  <div class="navbar">
    <svg viewBox="0 0 32 212" role="img" aria-label="Navigation bar">
      <g fill="none" stroke="#3f4349" stroke-width="1.200">
        <circle cx="26" cy="5" r="3.500"/><path d="M24 3l4 4M28 3l-4 4"/>
        <path d="M16 19h10v11a10.500 10.500 0 1 1-10-11zM9 37l4-4M23 37l-4-4"/><circle cx="16" cy="30" r="6"/>
        <path d="M13 83q-3-7-8-11 2-3 7 2l-3-10q2-2 5 7l1-10q3-2 3 10l3-9q3 0 0 10l4-6q3 1-1 8-1 7-4 9z" fill="#646a72"/>
        <path d="M5 90l15 15M20 90L5 105M5 94v-4h4M16 90h4v4M5 101v4h4"/><circle cx="20" cy="104" r="5" fill="#646a72"/><path d="M23 108l4 4" stroke-width="3"/>
        <circle cx="16" cy="138" r="9" fill="#646a72"/><circle cx="23" cy="133" r="4.500"/><path d="M7 146q-5 1 0-6M7 146q8-1 18-11"/>
        <path d="M4.500 169.500h6v6h-6zM12.500 169.500h6v6h-6zM20.500 169.500h6v6h-6zM4.500 178.500h16v13h-16z"/>
        <circle cx="26" cy="206" r="3.500"/><path d="M23 206h6"/>
      </g>
      <path d="M9 181l7 4-7 4zM14 49h5l-2.500 3zM14 119h5l-2.500 3zM14 157h5l-2.500 3z" fill="#33373c"/>
      <path d="M3 56h26M3 164h26" stroke="#7b7f85" stroke-width=".8"/>
    </svg>
  </div>

  <svg class="cross" viewBox="0 0 70 66" aria-hidden="true"><g stroke-width="1" fill="none"><path d="M2 3l39 59" stroke="#8080ff"/><path d="M45 16L20 55" stroke="#ff8080"/><path d="M68 29L8 49" stroke="#80ff80"/><path d="M24.500 39.500h6v6h-6z" stroke="#fff" fill="#212830"/></g></svg>

  <svg class="ucs" viewBox="0 0 110 66" role="img" aria-label="UCS icon">
    <path d="M50 63l39-14" stroke="#3a8a3a" stroke-width="5"/><path d="M50 62l39-14" stroke="#6fb36c" stroke-width="1.500"/>
    <path d="M50 63L26 25" stroke="#3f79cc" stroke-width="5"/><path d="M49 61L26 26" stroke="#9cc7ff" stroke-width="1.500"/>
    <path d="M50 64l16-26" stroke="#7f3434" stroke-width="5"/><path d="M50 62l15-25" stroke="#b05c58" stroke-width="1.500"/><circle cx="66" cy="38" r="2.500" fill="#e09a96"/>
    <text x="23" y="20" fill="#1260ff">Z</text><text x="65" y="32" fill="#b04a4a">X</text><text x="87" y="43" fill="#1fae1f">Y</text>
  </svg>

  <div class="vscroll"></div>

  <form class="command">
    <div class="grip"><span class="dots"></span><button type="button" aria-label="Close"><svg class="cx" viewBox="0 0 10 10"><path d="M1 1l8 8M9 1L1 9" stroke="#ddd" stroke-width="1.800"/></svg></button><button type="button" aria-label="Customize"><svg viewBox="0 0 16 16"><path d="M2 4l3 2 1-1-1-3q4-1 5 4l5 6q0 3-3 2L7 8Q2 9 2 4z" fill="#ddd" stroke="#222" stroke-width=".8"/></svg></button></div>
    <span class="prompt"><svg viewBox="0 0 14 12"><path d="M2 3l4 3-4 3M7 10h5" fill="none" stroke="#333" stroke-width="1.300"/></svg></span><i class="dd small grey"></i>
    <input type="text" placeholder="Type a command" aria-label="Command">
    <i class="up"></i>
  </form>
</main>

<footer class="bottom">
  <nav class="layouts"><button class="on">Model</button><button>Layout1</button><button>Layout2</button><button class="plus" aria-label="New layout">+</button></nav>
  <div class="status">
    <div class="group"><button class="model">MODEL</button></div>
    <div class="group"><span class="cell"><svg class="i"><use href="#s-grid"/></svg><svg class="i"><use href="#s-dots"/></svg><i class="dd"></i></span></div>
    <div class="group">
      <span class="cell"><svg class="i"><use href="#s-snap"/></svg></span>
      <span class="cell"><svg class="i lit"><use href="#s-dyn"/></svg></span>
      <span class="cell"><svg class="i lit"><use href="#s-ortho"/></svg><svg class="i"><use href="#s-polar"/></svg><i class="dd"></i><svg class="i"><use href="#s-iso"/></svg><i class="dd"></i></span>
      <span class="cell"><svg class="i lit"><use href="#s-track"/></svg><svg class="i lit"><use href="#s-osnap"/></svg><i class="dd"></i></span>
      <span class="cell"><svg class="i"><use href="#s-lwt"/></svg></span>
      <span class="cell"><svg class="i lit"><use href="#s-trans"/></svg></span>
      <span class="cell"><svg class="i"><use href="#s-cycle"/></svg></span>
      <span class="cell"><svg class="i"><use href="#s-3dos"/></svg><i class="dd"></i></span>
    </div>
    <div class="group"><span class="cell"><svg class="i lit"><use href="#s-ducs"/></svg><svg class="i"><use href="#s-cube"/></svg><i class="dd"></i><svg class="i"><use href="#g3move"/></svg><i class="dd"></i></span></div>
    <div class="group"><span class="cell"><svg class="i lit"><use href="#s-ann1"/></svg><svg class="i"><use href="#s-ann2"/></svg><svg class="i"><use href="#s-ann"/></svg><button>1:1</button><i class="dd"></i></span></div>
    <div class="group"><span class="cell"><svg class="i"><use href="#s-gear"/></svg><i class="dd"></i></span><span class="cell"><svg class="i"><use href="#s-plus"/></svg></span></div>
    <div class="group"><span class="cell"><svg class="i"><use href="#s-ruler"/></svg><button class="units">Decimal</button><i class="dd"></i></span><span class="cell"><svg class="i"><use href="#s-list"/></svg></span></div>
    <div class="group"><span class="cell"><svg class="i"><use href="#s-lock"/></svg><i class="dd"></i></span><span class="cell"><svg class="i"><use href="#s-iso2"/></svg></span></div>
    <div class="group"><span class="cell"><svg class="i lit"><use href="#s-hw"/></svg></span></div>
    <div class="group"><span class="cell"><svg class="i"><use href="#s-dwg"/></svg></span></div>
    <div class="group"><span class="cell"><svg class="i"><use href="#s-clean"/></svg><svg class="i"><use href="#s-menu"/></svg></span></div>
  </div>
</footer>

<script src="screw.js"></script>
</body>
</html>
```

FILE: styles.css
```css
* { box-sizing: border-box; }
body { margin: 0; height: 100vh; display: flex; flex-direction: column; overflow: hidden; background: #383838; color: #e8e8e8; font: 12px/16px "Open Sans", "Noto Sans", sans-serif; }
button, select, input { font: inherit; color: inherit; }
button { background: none; border: 0; padding: 0; display: flex; align-items: center; justify-content: center; white-space: nowrap; }
h1, h2 { margin: 0; font-weight: normal; }
svg { display: block; flex: none; }
.sprite { position: absolute; width: 0; height: 0; }
.i { width: 20px; height: 20px; }

/* shared strokes of the icons */
.w { fill: none; stroke: #dcdcdc; }
.b { fill: none; stroke: #6aa9f7; stroke-width: 1.4; }
.n { fill: #3d4654; stroke: #6aa9f7; }
.s { fill: none; stroke: #1e90ff; stroke-width: 1.5; }
.qm { font: bold 14px "Open Sans", sans-serif; fill: #1d4fa8; text-anchor: middle; }
.ax { font: bold 11px "Open Sans", sans-serif; fill: #4d98fa; }
.lit { filter: drop-shadow(0 0 2px #0a62d0); }

.dd { flex: none; width: 0; height: 0; border: 4px solid transparent; border-top: 5px solid #f0f0f0; border-bottom: 0; }
.dd.small { border-width: 3px 3px 0; }
.dd.dark { border-top-color: #333; }
.dd.grey { border-top-color: #666; }
.launch { width: 7px; height: 7px; }

/* title bar and menu */
.top { display: grid; grid-template: 24px 21px / 41px 1fr; background: #444; }
.app { grid-row: 1 / 3; margin: 0 0 4px; border: 1px solid #111; background: linear-gradient(#a5a5a5, #6a6a6a); gap: 3px; }
.app svg { width: 25px; height: 28px; }
.titlebar { display: flex; background: #d3bf7a; }
.qat, .info { display: flex; align-items: center; background: linear-gradient(#a3a3a3, #7f7f7f); }
.qat { padding-left: 5px; }
.qat button, .info button { width: 24px; height: 24px; }
.qat button.thin { width: 12px; }
.qat button:last-child { margin-right: 4px; }
.titlebar h1 { flex: 1; padding-left: 14px; text-align: center; font-size: 14px; line-height: 24px; color: #222; }
.combo { display: flex; align-items: center; height: 23px; padding: 0 4px 0 0; border: 1px solid #333; background: linear-gradient(#707070, #555); gap: 1px; }
.combo select { flex: 1; min-width: 0; appearance: none; border: 0; padding: 0; background: none; color: #f0f0f0; }
.workspace { width: 180px; background: #595959; margin: 0 0 0 1px; }
.info { width: 445px; }
.play { margin: 0 5px 0 4px; border: 4px solid transparent; border-left: 5px solid #fff; border-right: 0; }
.search { width: 181px; height: 22px; padding: 0 3px; border: 1px solid #333; background: #787878; font-style: italic; font-size: 11px; }
.search::placeholder { color: #d8d8d8; opacity: 1; }
.info .signin { flex: 1; justify-content: flex-start; gap: 2px; padding-left: 1px; }
.signin .dd { margin-left: auto; margin-right: 6px; }
.rule { width: 1px; height: 14px; margin: 0 4px 0 10px; background: #999; }
.info > .dd:last-child { margin: 0 5px 0 3px; }
.win { display: flex; align-items: flex-start; padding-right: 3px; width: 122px; justify-content: flex-end; }
.win button { width: 26px; height: 21px; }
.win svg { width: 12px; height: 12px; }
.win .close { width: 45px; height: 20px; margin-left: 1px; background: #c75050; }
.menubar { display: flex; padding-left: 3px; background: linear-gradient(#9a9a9a, #575757); border-top: 1px solid #444; }
.menubar button { padding: 0 11px; }
.docwin { margin-left: auto; align-self: center; }
.docwin svg { width: 46px; height: 14px; margin-right: 2px; }

.tabs { display: flex; align-items: flex-end; height: 21px; padding: 0 4px; background: #535353; border-bottom: 1px solid #2e2e2e; border-top: 1px solid #3a3a3a; }
.tabs button { padding: 0 9px 0 8px; height: 18px; color: #dadada; }
.tabs .on { padding: 0 9px 1px 8px; color: #fff; background: #5c5c5c; border: 1px solid #2e2e2e; border-bottom: 0; margin-right: 4px; }
.tabs .mini { padding: 0 5px 1px; margin-left: 14px; }
.tabs > .dd { margin-bottom: 8px; }
.mini svg { width: 14px; height: 9px; }

/* ribbon panels */
.ribbon { display: flex; height: 99px; padding-left: 2px; background: #535353; border-bottom: 2px solid #8a8a8a; }
.panel { display: flex; flex-direction: column; border-right: 1px solid #383838; background: linear-gradient(#5d5d5d, #555); }
.panel h2 { display: flex; align-items: center; justify-content: center; gap: 7px; height: 18px; margin: 0 1px; font-size: 12px; background: #484848; }
.tools { display: flex; height: 79px; padding: 4px 0 0 2px; }
.tools.col { flex-direction: column; gap: 1px; padding-right: 2px; }
.big { flex-direction: column; justify-content: flex-start; padding-top: 1px; line-height: 15px; }
.big svg { width: 34px; height: 34px; margin-bottom: 3px; }
.big .dd { margin-top: 4px; }
.grid { display: grid; grid-auto-rows: 24px; align-items: center; justify-items: center; }
.modeling { width: 127px; }
.modeling .big { width: 42px; }
.modeling .big + .big { width: 54px; }
.modeling .one { width: 28px; }
.mesh { width: 78px; }
.mesh .big { width: 48px; }
.mesh .one { width: 26px; }
.mesh h2 { padding-left: 12px; gap: 20px; }
.editing { width: 95px; }
.editing .grid { grid-template-columns: 26px 26px 26px 8px; }
.draw { width: 94px; }
.draw .grid { grid-template-columns: 26px 22px 34px 2px; }
.modify { width: 145px; }
.modify .tools { padding-left: 0; }
.modify .grid { grid-template-columns: 26px 26px 26px 26px 26px 10px; }
.section { width: 76px; }
.section .big { width: 72px; }
.coords { width: 145px; }
.coords .grid { grid-template-columns: 26px 12px 28px 26px 24px 24px; }
.coords .grid .dd { justify-self: start; }
.coords h2 { padding-left: 28px; gap: 32px; }
.world { grid-column: 3 / 7; justify-self: stretch; height: 22px; margin-left: 2px; }
.views { width: 127px; }
.viewbtn { align-self: flex-start; height: 24px; padding-left: 2px; gap: 3px; }
.selection { width: 171px; }
.selection .big { width: 62px; padding-top: 1px; }
.selection .pressed { width: 44px; height: 72px; margin-right: 2px; border: 1px solid #2f4a78; background: linear-gradient(#8fb0e0, #4f6c9c); padding-top: 0; }
.low { margin-top: 54px; margin-left: -11px; }
.folded { width: 61px; border: 1px solid #303030; border-left-color: #444; background: linear-gradient(#757575, #4d4d4d); justify-content: flex-start; padding: 3px 0 4px; }
.folded svg { width: 34px; height: 34px; margin-bottom: 2px; }
.folded svg.i { width: 20px; height: 20px; margin-bottom: 0; }
.folded .dd { margin-top: auto; }

/* drawing tabs */
.files { display: flex; align-items: flex-end; height: 29px; padding-left: 17px; border-bottom: 4px solid #595959; background: #383838; }
.file { width: 130px; height: 22px; padding: 2px 14px 0; justify-content: flex-start; color: #bbb; background: #555; clip-path: polygon(0 100%, 3px 92%, 7px 20%, 12px 0, calc(100% - 12px) 0, calc(100% - 7px) 20%, calc(100% - 3px) 92%, 100% 100%); }
.file.on { width: 172px; padding-left: 11px; margin-left: -3px; color: #fff; background: linear-gradient(#858585, #595959); }
.x { width: 8px; height: 8px; margin-left: 5px; }
.add { width: 26px; height: 16px; padding: 0; margin: 0 0 2px 1px; justify-content: center; font-weight: bold; font-size: 15px; clip-path: polygon(0 0, 80% 0, 100% 100%, 20% 100%); }

/* model space */
.canvas { flex: 1; position: relative; min-height: 0; overflow: hidden; background: #212830; }
.vplabel { padding: 6px 3px; color: #f4f4f4; font-size: 12px; }
.scene { position: absolute; left: calc(50% - 343px); top: 96px; width: 660px; height: 400px; }
.viewcube { position: absolute; right: 13px; top: 29px; width: 100px; height: 87px; }
.face { font: bold 22px "Open Sans", sans-serif; fill: #4a525c; }
.face.small { font-size: 18px; }
.wcs { position: absolute; right: 49px; top: 130px; width: 48px; height: 17px; gap: 5px; border-radius: 3px; border: 1px solid #7c7e8a; background: #9b9cab; color: #555863; font: 11px "Liberation Sans", sans-serif; }
.wcs svg { width: 10px; height: 6px; }
.navbar { position: absolute; right: 12px; top: 173px; width: 32px; height: 212px; border-radius: 3px; background: #5e6267; }
.navbar svg { width: 32px; height: 212px; }
.cross { position: absolute; right: 175px; top: 361px; width: 70px; height: 66px; }
.ucs { position: absolute; left: 0; bottom: 47px; width: 110px; height: 66px; }
.ucs text { font: 18px "Open Sans", sans-serif; font-weight: 300; }
.vscroll { position: absolute; right: 0; top: 0; bottom: 0; width: 8px; background: linear-gradient(90deg, #bdd4ee 75%, #27c5e8 75%); }

.command { position: absolute; left: 281px; right: 282px; bottom: 1px; height: 26px; display: flex; align-items: center; background: #bcbec0; border: 1px solid #666; }
.grip { display: flex; align-items: center; align-self: stretch; width: 53px; padding-left: 3px; gap: 6px; background: linear-gradient(#666, #444); }
.grip svg { width: 16px; height: 16px; }
.grip svg.cx { width: 9px; height: 9px; }
.grip button + button { margin-left: 2px; }
.dots { width: 6px; height: 18px; background: radial-gradient(circle, #aaa 1px, transparent 1px) 0 0 / 3px 3px; }
.prompt { width: 16px; height: 14px; margin: 0 3px 0 5px; border: 1px solid #74808e; background: #a9b3bf; }
.command input { flex: 1; min-width: 0; border: 0; background: none; padding: 0 7px; font: italic 12px "DejaVu Sans Mono", monospace; }
.command input::placeholder { color: #74777a; opacity: 1; }
.up { margin-right: 3px; border: 4px solid transparent; border-bottom: 5px solid #222; border-top: 0; }

/* layout tabs and status bar */
.bottom { display: flex; height: 30px; border-bottom: 2px solid #ab9c6b; border-top: 1px solid #666; background: #3a3a3a; overflow: hidden; }
.layouts { display: flex; padding-left: 11px; }
.layouts button { height: 17px; width: 67px; padding-bottom: 1px; margin-right: -2px; color: #bbb; background: #595959; clip-path: polygon(0 0, 100% 0, calc(100% - 5px) 85%, calc(100% - 10px) 100%, 10px 100%, 5px 85%); }
.layouts .on { width: 60px; color: #fff; font-weight: bold; background: linear-gradient(#595959, #8a8a8a); }
.layouts .plus { width: 24px; margin-left: 4px; font-weight: bold; font-size: 15px; }
.status { display: flex; gap: 1px; margin-left: auto; }
.group { display: flex; border: 1px solid #787878; background: #4e4e4e; }
.cell { display: flex; align-items: center; }
.cell + .cell { border-left: 1px solid #787878; }
.cell .i { margin: 0 2px; }
.cell .w { stroke: #bcbcbc; }
.cell .dd { margin: 0 3px 0 4px; }
.cell button { width: 18px; color: #fff; }
.cell .units { width: 58px; }
.model { width: 46px; color: #fff; }
```

FILE: screw.js
```js
const NS = "http://www.w3.org/2000/svg";
const shank = document.getElementById("shank");
const head = document.getElementById("head");

function add(parent, d, fill, extra) {
    const p = document.createElementNS(NS, "path");
    p.setAttribute("d", d);
    p.setAttribute("fill", fill);
    for (const k in extra || {}) p.setAttribute(k, extra[k]);
    parent.appendChild(p);
    return p;
}

function poly(pts) {
    return "M" + pts.map(p => p[0].toFixed(1) + " " + p[1].toFixed(1)).join("L") + "Z";
}

// threads, from the tip back to the collar
add(shank, "M1090 72Q1150 66 1200 130Q1240 195 1253 280Q1254 345 1235 375L1160 300Z", "url(#tip)");
const ring = "M1020 43C1120 42 1236 230 1236 375C1236 430 1215 462 1168 474";
for (let i = 0; i <= 18; i++) {
    const t = "translate(" + (-54.3 * i) + " " + (19.7 * i) + ")";
    add(shank, ring + "Q1140 486 1113 494L900 200L955 65Q985 44 1020 43Z", "url(#thread)", { transform: t });
    add(shank, ring, "none", { transform: t, stroke: "url(#ring)", "stroke-width": 5 });
}

// collar behind the head
add(head, "M520 150Q555 100 610 98Q680 100 740 160Q810 235 845 350Q866 430 861 510Q850 640 760 660L600 600Z", "url(#collar)");

// knurl: F is the front edge of the head, one entry per tooth
const F = [[40, 260], [100, 190], [180, 165], [250, 190], [310, 235], [365, 290], [410, 360], [448, 435], [475, 515], [492, 598], [500, 680], [495, 755], [470, 825], [420, 870], [350, 890]];
const axis = [262, -94];

function edge(t) {
    t = Math.max(0, Math.min(F.length - 1.001, t));
    const i = Math.floor(t), f = t - i;
    return [F[i][0] + (F[i + 1][0] - F[i][0]) * f, F[i][1] + (F[i + 1][1] - F[i][1]) * f];
}

function at(u, t, lift) {
    u = Math.min(u, 1);
    const p = edge(t), a = edge(t - 0.5), b = edge(t + 0.5);
    const dx = b[0] - a[0], dy = b[1] - a[1], len = Math.hypot(dx, dy) || 1;
    return [p[0] + u * axis[0] + dy / len * lift, p[1] + u * axis[1] - dx / len * lift];
}

function grey(v) {
    v = Math.round(Math.max(60, Math.min(255, v)));
    return "rgb(" + v + "," + v + "," + v + ")";
}

function mix(a, b, f) {
    return [a[0] + (b[0] - a[0]) * f, a[1] + (b[1] - a[1]) * f];
}

const body = [];
for (let t = 1.5; t <= 13; t += 0.25) body.push(at(0, t, 0));
for (let t = 13; t >= 1.5; t -= 0.25) body.push(at(1, t, 0));
add(head, poly(body), "#9a9a9a");

for (let t = 2; t <= 13; t += 0.5) {
    const start = Number.isInteger(t) ? 0 : -0.23;
    for (let u = start; u < 0.8; u += 0.46) {
        const L = at(u, t, 0), T = at(u + 0.23, t - 0.5, 0), R = at(u + 0.46, t, 0), B = at(u + 0.23, t + 0.5, 0);
        // seen from above the peaks rise, lower down they lean over the valley
        const A = at(u + 0.25, t, 13);
        // brightness peaks a little under the middle of the drum
        const k = Math.exp(-Math.pow((t - 8.5) / 1.8, 2)) * 36;
        const dark = Math.abs(t - 8) < 3 ? 106 : 124;
        add(head, poly([L, T, A]), grey(178 + k));
        add(head, poly([T, R, A]), grey(160 + k * 0.4));
        add(head, poly([R, B, A]), grey(186 + k));
        add(head, poly([L, B, A]), grey(dark));
        // cut valley next to the tooth
        add(head, poly([T, mix(T, R, 0.45), mix(A, R, 0.4), mix(T, A, 0.6)]), grey(134 + k * 0.5));
        // last row: teeth stand out over the collar
        if (u > 0.6) add(head, poly([T, at(1.04, t, 16), B]), grey(168 + k));
    }
}

// bevel between the knurl and the flat face
const bevel = [[46, 430], [46, 370], [55, 310], [62, 262], [72, 265], [80, 212], [90, 205], [100, 215], [115, 170], [130, 175], [140, 190], [165, 172], [178, 150], [190, 180], [215, 155], [240, 160], [248, 198], [280, 178], [293, 200], [308, 238], [340, 222], [352, 250], [362, 292], [395, 285], [408, 320], [410, 362], [438, 365], [452, 395], [440, 430], [466, 445], [490, 472], [472, 518], [500, 545], [520, 575], [488, 598], [518, 640], [495, 680], [516, 718], [485, 752], [502, 790], [472, 770], [497, 810], [450, 825], [470, 850], [430, 852], [445, 880], [412, 862], [390, 885], [370, 892], [320, 885], [300, 870], [260, 848], [215, 815], [150, 755], [110, 700], [80, 640], [60, 570], [50, 500]];
document.getElementById("bevel-path").setAttribute("d", poly(bevel));
const tones = [[-180, 130], [-130, 165], [-105, 180], [-92, 200], [-76, 248], [-60, 255], [-42, 255], [-34, 225], [-20, 200], [-4, 178], [15, 155], [35, 122], [58, 82], [78, 60], [95, 90], [130, 120], [180, 130]];
const g = document.createElementNS(NS, "g");
g.setAttribute("clip-path", "url(#bevel)");
head.appendChild(g);
for (let a = -180; a < 180; a += 2) {
    let i = 0;
    while (tones[i + 1][0] <= a) i++;
    const f = (a - tones[i][0]) / (tones[i + 1][0] - tones[i][0]);
    const r0 = a * Math.PI / 180, r1 = (a + 3) * Math.PI / 180;
    add(g, poly([[220, 545], [220 + 600 * Math.cos(r0), 545 + 600 * Math.sin(r0)], [220 + 600 * Math.cos(r1), 545 + 600 * Math.sin(r1)]]), grey(tones[i][1] + (tones[i + 1][1] - tones[i][1]) * f));
}

add(head, "M150 266Q235 262 310 370Q385 485 399 640Q400 735 365 788Q335 822 300 824Q220 815 140 720Q70 630 50 500Q40 420 52 365Q85 268 150 266Z", "#969696");
```
